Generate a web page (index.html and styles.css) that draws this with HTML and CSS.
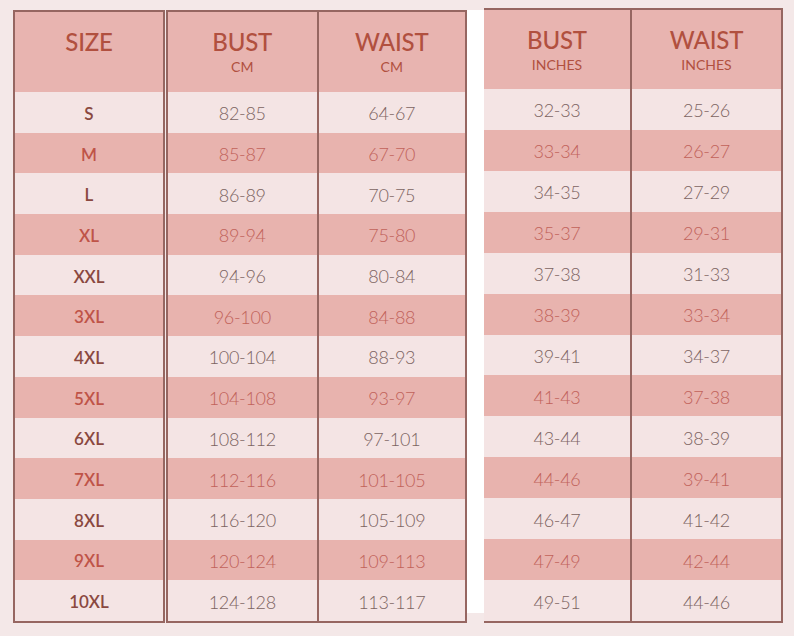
FILE: index.html
```html
<!DOCTYPE html>
<html>
<head>
<meta charset="utf-8">
<link rel="stylesheet" href="styles.css">
</head>
<body>
<div class="chart">
  <div class="panel size">
    <div class="head"><span class="title">SIZE</span><span class="unit">&nbsp;</span></div>
    <div class="cell lbl">S</div>
    <div class="cell lbl d">M</div>
    <div class="cell lbl">L</div>
    <div class="cell lbl d">XL</div>
    <div class="cell lbl">XXL</div>
    <div class="cell lbl d">3XL</div>
    <div class="cell lbl">4XL</div>
    <div class="cell lbl d">5XL</div>
    <div class="cell lbl">6XL</div>
    <div class="cell lbl d">7XL</div>
    <div class="cell lbl">8XL</div>
    <div class="cell lbl d">9XL</div>
    <div class="cell lbl">10XL</div>
  </div>
  <div class="panel cm">
    <div class="head"><span class="title">BUST</span><span class="unit">CM</span></div>
    <div class="head sep"><span class="title">WAIST</span><span class="unit">CM</span></div>
    <div class="cell">82-85</div><div class="cell sep">64-67</div>
    <div class="cell d">85-87</div><div class="cell sep d">67-70</div>
    <div class="cell">86-89</div><div class="cell sep">70-75</div>
    <div class="cell d">89-94</div><div class="cell sep d">75-80</div>
    <div class="cell">94-96</div><div class="cell sep">80-84</div>
    <div class="cell d">96-100</div><div class="cell sep d">84-88</div>
    <div class="cell">100-104</div><div class="cell sep">88-93</div>
    <div class="cell d">104-108</div><div class="cell sep d">93-97</div>
    <div class="cell">108-112</div><div class="cell sep">97-101</div>
    <div class="cell d">112-116</div><div class="cell sep d">101-105</div>
    <div class="cell">116-120</div><div class="cell sep">105-109</div>
    <div class="cell d">120-124</div><div class="cell sep d">109-113</div>
    <div class="cell">124-128</div><div class="cell sep">113-117</div>
  </div>
  <div class="strip"></div>
  <div class="panel inch">
    <div class="head"><span class="title">BUST</span><span class="unit">INCHES</span></div>
    <div class="head sep"><span class="title">WAIST</span><span class="unit">INCHES</span></div>
    <div class="cell">32-33</div><div class="cell sep">25-26</div>
    <div class="cell d">33-34</div><div class="cell sep d">26-27</div>
    <div class="cell">34-35</div><div class="cell sep">27-29</div>
    <div class="cell d">35-37</div><div class="cell sep d">29-31</div>
    <div class="cell">37-38</div><div class="cell sep">31-33</div>
    <div class="cell d">38-39</div><div class="cell sep d">33-34</div>
    <div class="cell">39-41</div><div class="cell sep">34-37</div>
    <div class="cell d">41-43</div><div class="cell sep d">37-38</div>
    <div class="cell">43-44</div><div class="cell sep">38-39</div>
    <div class="cell d">44-46</div><div class="cell sep d">39-41</div>
    <div class="cell">46-47</div><div class="cell sep">41-42</div>
    <div class="cell d">47-49</div><div class="cell sep d">42-44</div>
    <div class="cell">49-51</div><div class="cell sep">44-46</div>
  </div>
</div>
</body>
</html>
```
FILE: styles.css
```css
html, body {
  margin: 0;
  padding: 0;
  background: #f4e8e8;
  font-family: Lato, "Open Sans", sans-serif;
}

.chart {
  display: flex;
  align-items: flex-start;
  padding: 10px 0 0 13px;
}

.panel {
  box-sizing: border-box;
  display: grid;
  grid-template-rows: 80px repeat(13, 1fr);
  border: 2px solid #966661;
  height: 613px;
}

.size {
  width: 152px;
}

.cm {
  width: 301px;
  margin-left: 1px;
  grid-template-columns: 1fr 1fr;
}

.strip {
  width: 17px;
  height: 603px;
  background: #ffffff;
}

.inch {
  width: 299px;
  height: 615px;
  margin-top: -2px;
  border-left: none;
  grid-template-columns: 146px 1fr;
  grid-template-rows: 79px repeat(13, 1fr);
}

.head {
  background: #e8b4b0;
  display: flex;
  flex-direction: column;
  align-items: center;
  padding-top: 18px;
  color: #b1503f;
}

.title {
  font-size: 24px;
  line-height: 24px;
  font-weight: 500;
  letter-spacing: -0.2px;
}

.unit {
  font-size: 14px;
  line-height: 14px;
  margin-top: 6px;
  font-weight: 400;
}

.sep {
  border-left: 2px solid #966661;
}

.cell {
  background: #f4e4e4;
  display: flex;
  align-items: center;
  justify-content: center;
  font-size: 18px;
  font-weight: 300;
  color: #7c6361;
  letter-spacing: -0.3px;
  padding-top: 2px;
}

.cell.d {
  background: #e8b3ae;
  color: #c1625a;
}

.lbl {
  font-size: 17px;
  font-weight: 600;
  color: #8a4840;
  letter-spacing: 0;
}

.lbl.d {
  color: #bf5448;
}
```
